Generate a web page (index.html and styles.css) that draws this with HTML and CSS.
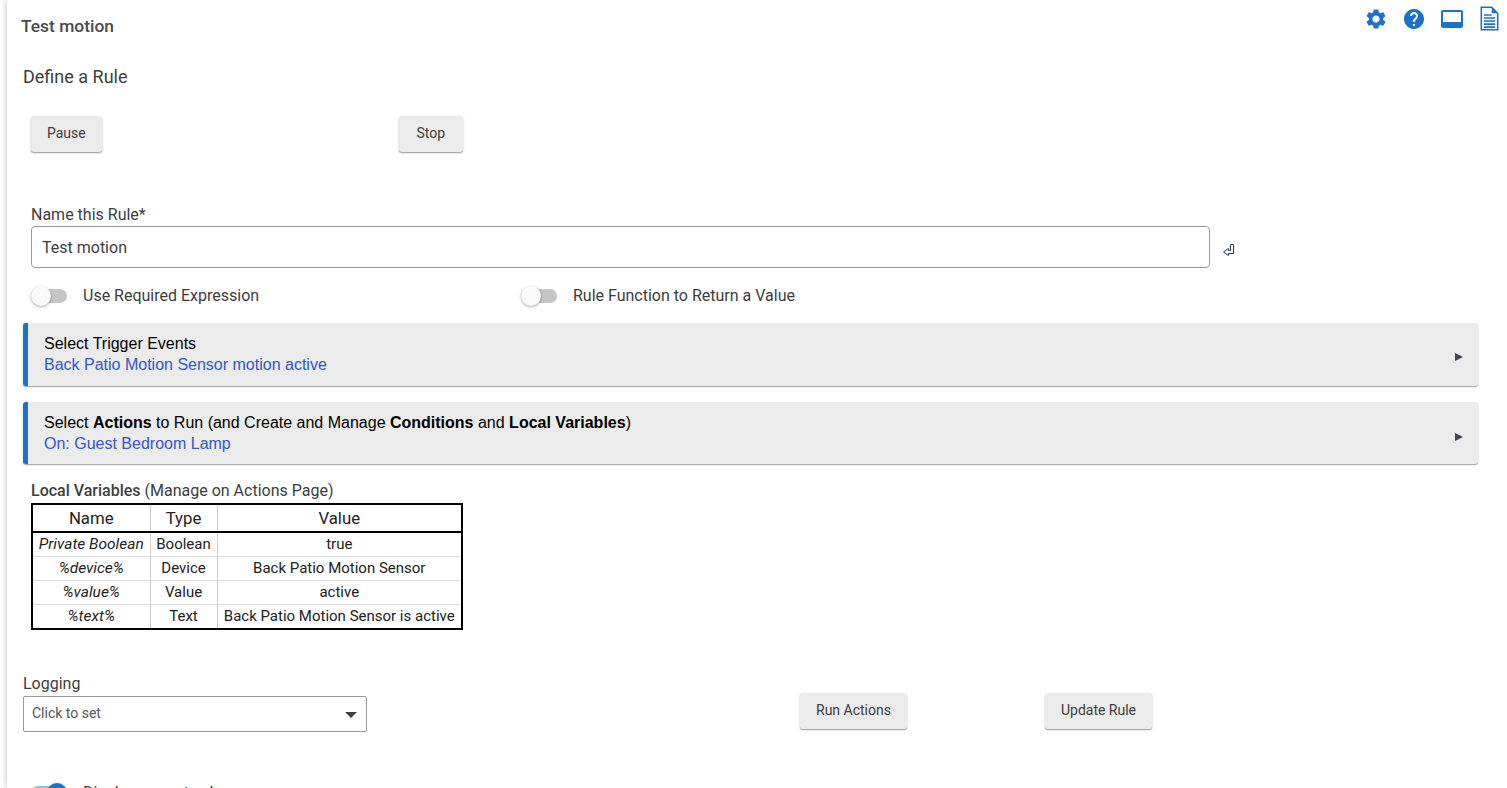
FILE: index.html
```html
<!DOCTYPE html>
<html lang="en">
<head>
<meta charset="utf-8">
<title>Test motion</title>
<link rel="stylesheet" href="styles.css">
</head>
<body>
<main class="page">
  <header class="top">
    <h1 class="app-title">Test motion</h1>
    <div class="top-icons">
      <svg class="ico" viewBox="0 0 24 24"><path d="M19.14 12.94c.04-.3.06-.61.06-.94 0-.32-.02-.64-.07-.94l2.03-1.58a.49.49 0 0 0 .12-.61l-1.92-3.32a.488.488 0 0 0-.59-.22l-2.39.96c-.5-.38-1.03-.7-1.62-.94l-.36-2.54a.484.484 0 0 0-.48-.41h-3.84c-.24 0-.43.17-.47.41l-.36 2.54c-.59.24-1.13.57-1.62.94l-2.39-.96c-.22-.08-.47 0-.59.22L2.74 8.87c-.12.21-.08.47.12.61l2.03 1.58c-.05.3-.09.63-.09.94s.02.64.07.94l-2.03 1.58a.49.49 0 0 0-.12.61l1.92 3.32c.12.22.37.29.59.22l2.39-.96c.5.38 1.03.7 1.62.94l.36 2.54c.05.24.24.41.48.41h3.84c.24 0 .44-.17.47-.41l.36-2.54c.59-.24 1.13-.56 1.62-.94l2.39.96c.22.08.47 0 .59-.22l1.92-3.32c.12-.22.07-.47-.12-.61l-2.01-1.58zM12 15.6c-1.98 0-3.6-1.62-3.6-3.6s1.62-3.6 3.6-3.6 3.6 1.62 3.6 3.6-1.62 3.6-3.6 3.6z"/></svg>
      <svg class="ico" viewBox="0 0 24 24"><path d="M12 2C6.48 2 2 6.48 2 12s4.48 10 10 10 10-4.48 10-10S17.52 2 12 2zm1 17h-2v-2h2v2zm2.07-7.75l-.9.92C13.45 12.9 13 13.5 13 15h-2v-.5c0-1.1.45-2.1 1.17-2.83l1.24-1.26c.37-.36.59-.86.59-1.41 0-1.1-.9-2-2-2s-2 .9-2 2H8c0-2.21 1.79-4 4-4s4 1.79 4 4c0 .88-.36 1.68-.93 2.25z"/></svg>
      <svg class="ico ico-screen" viewBox="0 0 24 24"><path d="M21 3H3c-1.1 0-2 .9-2 2v14c0 1.1.9 2 2 2h18c1.1 0 2-.9 2-2V5c0-1.1-.9-2-2-2zm0 12H3V5h18v10z"/></svg>
      <svg class="ico-doc" viewBox="0 0 22 28"><path d="M1.5 1h12l7 7v19h-19z" fill="none" stroke="#1a73c8" stroke-width="1.8"/><path d="M13.5 1v7h7z" fill="#1a73c8"/><path d="M4.5 10h9M4.5 13.5h13M4.5 17h13M4.5 20.5h13M4.5 24h13" stroke="#1a73c8" stroke-width="1.8" fill="none"/></svg>
    </div>
  </header>

  <h2 class="section-title">Define a Rule</h2>

  <div class="btn-row">
    <div class="btn-col"><button class="btn">Pause</button></div>
    <div class="btn-col"><button class="btn btn-stop">Stop</button></div>
  </div>

  <div class="name-field">
    <label class="field-label">Name this Rule*</label>
    <div class="name-line">
      <div class="text-input">Test motion</div>
      <svg class="enter-mark" viewBox="0 0 11 12"><path d="M7.5.5h3v9h-5v2L.5 8l5-3.5v2h2z"/></svg>
    </div>
  </div>

  <div class="toggle-row">
    <div class="toggle-col">
      <span class="switch"><span class="knob"></span></span>
      <span class="toggle-label">Use Required Expression</span>
    </div>
    <div class="toggle-col">
      <span class="switch"><span class="knob"></span></span>
      <span class="toggle-label">Rule Function to Return a Value</span>
    </div>
  </div>

  <section class="card card-first">
    <div class="card-text">
      <div class="card-title">Select Trigger Events</div>
      <div class="card-sub">Back Patio Motion Sensor motion active</div>
    </div>
    <span class="card-arrow"></span>
  </section>

  <section class="card card-second">
    <div class="card-text">
      <div class="card-title">Select <b>Actions</b> to Run (and Create and Manage <b>Conditions</b> and <b>Local Variables</b>)</div>
      <div class="card-sub">On: Guest Bedroom Lamp</div>
    </div>
    <span class="card-arrow"></span>
  </section>

  <div class="vars">
    <div class="vars-title"><b>Local Variables</b> (Manage on Actions Page)</div>
    <table class="vars-table">
      <thead>
        <tr><th class="c-name">Name</th><th class="c-type">Type</th><th class="c-value">Value</th></tr>
      </thead>
      <tbody>
        <tr><td><i>Private Boolean</i></td><td>Boolean</td><td>true</td></tr>
        <tr><td><i>%device%</i></td><td>Device</td><td>Back Patio Motion Sensor</td></tr>
        <tr><td><i>%value%</i></td><td>Value</td><td>active</td></tr>
        <tr class="row-last"><td><i>%text%</i></td><td>Text</td><td>Back Patio Motion Sensor is active</td></tr>
      </tbody>
    </table>
  </div>

  <div class="bottom-row">
    <div class="log-col">
      <label class="field-label">Logging</label>
      <div class="select-box">
        <span>Click to set</span>
        <span class="select-caret"></span>
      </div>
    </div>
    <button class="btn btn-run">Run Actions</button>
    <button class="btn btn-update">Update Rule</button>
  </div>

  <div class="display-row">
    <span class="switch switch-on"><span class="knob"></span></span>
    <span class="toggle-label">Display current values</span>
  </div>
</main>
</body>
</html>
```

FILE: styles.css
```css
* { box-sizing: border-box; }
html, body { margin: 0; padding: 0; height: 788px; overflow: hidden; background: #fff; }
body { font-family: Roboto, "Liberation Sans", sans-serif; color: #3d3d3d; padding-left: 7px; }
.page {
  height: 788px;
  overflow: hidden;
  box-shadow: 0 0 6px rgba(0, 0, 0, .28);
  background: #fff;
  padding: 0 0 0 16px;
}
.top { display: flex; justify-content: space-between; height: 40px; padding-top: 16px; margin-left: -2px; }
.app-title { margin: 0; font-size: 17.4px; line-height: 20px; font-weight: 500; color: #4a4a4a; }
.top-icons { display: flex; align-items: flex-start; margin-top: -9px; padding-right: 8px; }
.ico { width: 24px; height: 24px; fill: #1a73c8; margin-right: 14px; display: block; }
.ico-screen { margin-right: 16px; }
.ico-doc { width: 19px; height: 25px; display: block; margin-top: -1px; }
.section-title { margin: 27px 0 0; font-size: 18px; line-height: 20px; font-weight: 400; }
.btn-row { display: flex; margin-top: 29px; padding-left: 8px; }
.btn-col { width: 368px; }
.btn {
  display: block;
  height: 36px;
  border: 0;
  border-radius: 3px;
  background: #ebebeb;
  color: #3d3d3d;
  font: 400 14px/20px Roboto, sans-serif;
  padding: 0 16px 2px;
  box-shadow: 0 1px 3px rgba(0, 0, 0, .14), 0 1px 1px rgba(0, 0, 0, .3);
}
.btn-stop { padding: 0 17.5px 2px; }
.name-field { margin: 54px 0 0 8px; }
.field-label { display: block; font-size: 16px; line-height: 18px; }
.name-line { display: flex; align-items: center; margin-top: 2px; }
.text-input {
  width: 1179px;
  height: 42px;
  border: 1px solid #9a9a9a;
  border-radius: 4px;
  padding: 1px 10px 0;
  font-size: 16px;
  line-height: 40px;
}
.enter-mark { width: 11px; height: 12px; margin: 6px 0 0 13px; fill: #fff; stroke: #2a3a55; stroke-width: 1; flex: none; }
.toggle-row { display: flex; margin: 18px 0 0 8px; height: 20px; }
.toggle-col { display: flex; align-items: center; width: 490px; }
.switch { position: relative; display: block; width: 36px; height: 14px; border-radius: 7px; background: #c6c6c6; flex: none; }
.knob {
  position: absolute; left: 0; top: -3px;
  width: 20px; height: 20px; border-radius: 50%;
  background: #fafafa;
  box-shadow: 0 1px 3px rgba(0, 0, 0, .35);
}
.switch-on { background: #8dbce9; }
.switch-on .knob { left: 16px; background: #1a73c8; }
.toggle-label { margin-left: 16px; font-size: 16px; line-height: 20px; }
.card {
  display: flex; align-items: center; justify-content: space-between;
  width: 1455px;
  background: #ebebeb;
  border-left: 5px solid #1a73c8;
  border-radius: 3px;
  padding: 0 15px 0 16px;
  color: #000;
  box-shadow: 0 1px 3px rgba(0, 0, 0, .1), 0 1px 1px rgba(0, 0, 0, .3);
}
.card-first { margin-top: 17px; height: 63px; padding-bottom: 2px; }
.card-second { margin-top: 16px; height: 62px; }
.card-text { font-family: "Liberation Sans", Arial, sans-serif; font-size: 16px; line-height: 21px; }
.card-sub { color: #3557c5; }
.card-title b { font-weight: 700; }
.card-arrow {
  width: 0; height: 0;
  border-left: 8px solid #3d4350;
  border-top: 4.5px solid transparent;
  border-bottom: 4.5px solid transparent;
}
.card-first .card-arrow { margin-top: 7px; }
.card-second .card-arrow { margin-top: 8px; }
.vars { margin: 18px 0 0 8px; }
.vars-title { font-size: 16px; line-height: 18px; }
.vars-title b { font-weight: 500; }
.vars-table {
  margin-top: 3px;
  border-collapse: collapse;
  border: 2px solid #000;
  table-layout: fixed;
  width: 432px;
  font-size: 15px;
  color: #222;
}
.vars-table i { font-size: 15.5px; }
.vars-table th {
  height: 28px; font-weight: 400; font-size: 16.8px; padding: 0;
  border-bottom: 2px solid #000;
  border-left: 1px solid #ccc;
}
.vars-table td {
  height: 24px; padding: 0; text-align: center;
  border-left: 1px solid #ccc;
  border-top: 1px solid #ddd;
}
.vars-table .row-last td { height: 25px; }
.vars-table th:first-child, .vars-table td:first-child { border-left: 0; }
.c-name { width: 118px; }
.c-type { width: 67px; }
.bottom-row { display: flex; align-items: flex-start; margin-top: 45px; }
.log-col { width: 344px; }
.select-box {
  display: flex; align-items: center; justify-content: space-between;
  height: 36px; margin-top: 3px;
  border: 1px solid #9a9a9a; border-radius: 2px;
  padding: 0 9px 2px 8px;
  font-size: 14px; color: #555;
}
.select-caret {
  width: 0; height: 0;
  border-top: 6px solid #3d3d3d;
  border-left: 6px solid transparent;
  border-right: 6px solid transparent;
  margin-top: 4px;
}
.btn-run { margin: 18px 0 0 433px; }
.btn-update { margin: 18px 0 0 138px; }
.display-row { display: flex; align-items: center; margin: 51px 0 0 8px; height: 20px; }
```
